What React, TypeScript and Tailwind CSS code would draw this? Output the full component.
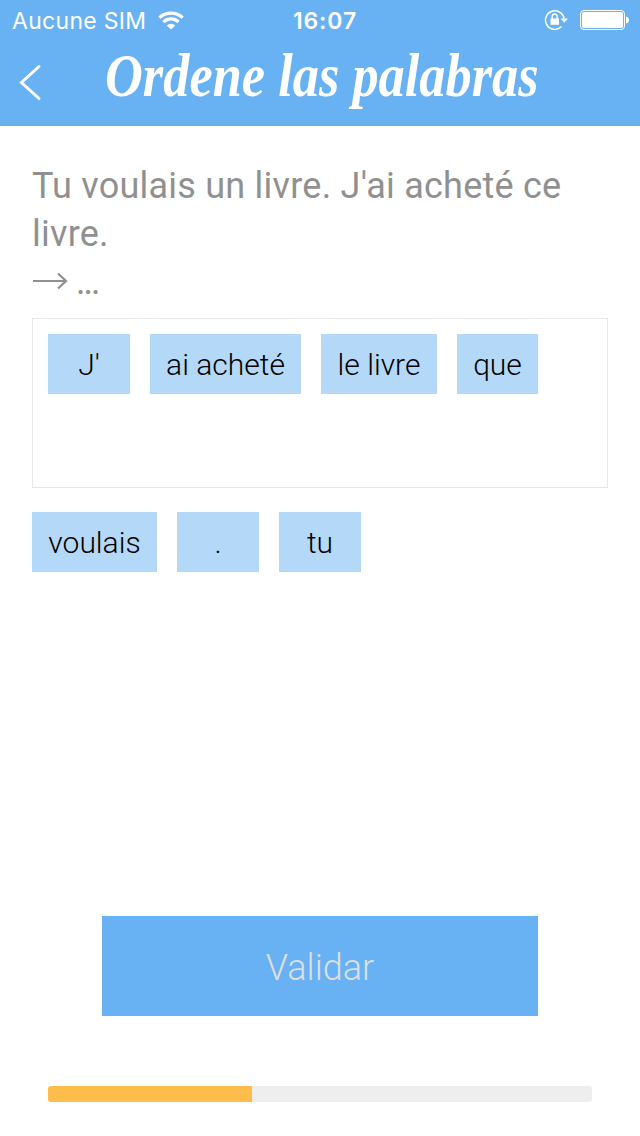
import React from 'react';

function Word({ text, className }: { text: string; className: string }) {
  return (
    <div className={`flex h-[60px] items-center justify-center bg-[#b4d8f8] text-[30px] font-light whitespace-nowrap text-black ${className}`}>
      {text}
    </div>
  );
}

export default function App() {
  return (
    <div className="flex h-[1136px] w-[640px] flex-col bg-white font-['Roboto',sans-serif]">
      <header className="h-[126px] bg-[#68b1f2] text-white">
        <div className="grid h-10 grid-cols-[1fr_auto_1fr] items-center pr-[11px] pl-[12px] font-['Inter',sans-serif] text-[23px]">
          <div className="flex items-center gap-[12px]">
            <span className="pt-0.5 tracking-[0.3px]">Aucune SIM</span>
            <svg width="26" height="19" viewBox="0 0 26 19" fill="none" stroke="white" strokeWidth="3.2">
              <path d="M1.3 6.7a17 17 0 0 1 23.4 0" />
              <path d="M5.4 11a11 11 0 0 1 15.2 0" />
              <path d="M13 18.5 8.8 14.4a6.1 6.1 0 0 1 8.4 0z" fill="white" stroke="none" />
            </svg>
          </div>
          <span className="pt-0.5 pl-[9px] font-semibold tracking-[0.9px]">16:07</span>
          <div className="flex items-center justify-end gap-[12px]">
            <svg width="24" height="22" viewBox="0 0 24 22" fill="none" stroke="white" strokeWidth="1.5">
              <path d="M17.5 17.6A9.3 9.3 0 1 1 20 9.5" />
              <path d="M16.5 9.5h7.5l-3.7 4.2z" fill="white" stroke="none" />
              <path d="M6.5 9.5h8.5v6.3H6.5z" fill="white" stroke="none" />
              <path d="M8.2 10V7.5a2.5 2.5 0 0 1 5 0V10" />
            </svg>
            <svg width="49" height="20" viewBox="0 0 49 20">
              <rect x=".5" y=".5" width="44" height="19" rx="3.5" fill="none" stroke="white" />
              <rect x="2" y="2" width="41" height="16" rx="2" fill="white" />
              <path d="M46 6.5q3 .5 3 3.5t-3 3.5z" fill="white" />
            </svg>
          </div>
        </div>
        <div className="flex h-[86px]">
          <svg width="60" height="86" fill="none" stroke="white" strokeWidth="3" strokeLinecap="round"><path d="M39 26.5 21.5 42.5 39 58.5" /></svg>
          <h1 className="ml-[45px] h-[70px] w-[500px] origin-left scale-x-[0.845] font-['Liberation_Serif',serif] text-[62px] leading-[70px] font-bold whitespace-nowrap italic">Ordene las palabras</h1>
        </div>
      </header>
      <main className="px-8 pt-[36px]">
        <p className="text-[36px] leading-[48px] tracking-[0.23px] whitespace-nowrap text-[#909090]">Tu voulais un livre. J'ai acheté ce<br />livre.</p>
        <div className="flex h-[60px] text-[36px] leading-[48px] text-[#909090]">
          <svg width="44" height="48" fill="none" stroke="#909090" strokeWidth="2.2"><path d="M1 23h33M26 15.5l8 7.5-8 7.5" /></svg>
          <span className="tracking-[-2px]">...</span>
        </div>
        <div className="flex h-[170px] gap-5 border border-[#e7e7e7] px-[15px] pt-[15px]">
          <Word text="J'" className="w-[82px]" />
          <Word text="ai acheté" className="w-[151px]" />
          <Word text="le livre" className="w-[116px]" />
          <Word text="que" className="w-[81px]" />
        </div>
        <div className="flex gap-5 pt-6">
          <Word text="voulais" className="w-[125px]" />
          <Word text="." className="w-[82px]" />
          <Word text="tu" className="w-[82px]" />
        </div>
      </main>
      <button className="mx-auto mt-[344px] h-[100px] w-[436px] bg-[#68b1f2] pt-1 text-[36px] font-light text-[#dedede]">Validar</button>
      <div className="mx-12 mt-[70px] h-4 overflow-hidden rounded-[3px] bg-[#eeeeee]">
        <div className="h-full w-[204px] bg-[#febd4a]" />
      </div>
    </div>
  );
}
